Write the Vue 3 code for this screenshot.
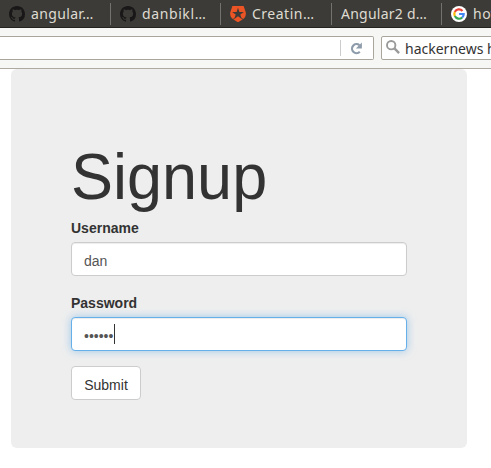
<script setup>
import { ref } from 'vue'

const tabs = [
  { icon: 'github', label: 'angular…', size: 'wide' },
  { icon: 'github', label: 'danbikl…', size: 'narrow' },
  { icon: 'auth0', label: 'Creatin…', size: 'wide' },
  { icon: '', label: 'Angular2 d…', size: 'plain' },
  { icon: 'google', label: 'how', size: 'wide' },
]
const username = ref('dan')
</script>

<template>
  <div class="window">
    <nav class="tabs">
      <div v-for="tab in tabs" :key="tab.label" class="tab" :class="tab.size">
        <svg v-if="tab.icon === 'github'" class="icon" viewBox="0 0 16 16">
          <path fill="#191717" d="M8 0C3.58 0 0 3.58 0 8c0 3.54 2.29 6.53 5.47 7.59.4.07.55-.17.55-.38 0-.19-.01-.82-.01-1.49-2.01.37-2.53-.49-2.69-.94-.09-.23-.48-.94-.82-1.13-.28-.15-.68-.52-.01-.53.63-.01 1.08.58 1.23.82.72 1.21 1.87.87 2.33.66.07-.52.28-.87.51-1.07-1.78-.2-3.64-.89-3.64-3.95 0-.87.31-1.59.82-2.15-.08-.2-.36-1.02.08-2.12 0 0 .67-.21 2.2.82.64-.18 1.32-.27 2-.27s1.36.09 2 .27c1.53-1.04 2.2-.82 2.2-.82.44 1.1.16 1.92.08 2.12.51.56.82 1.27.82 2.15 0 3.07-1.87 3.75-3.65 3.95.29.25.54.73.54 1.48 0 1.07-.01 1.93-.01 2.2 0 .21.15.46.55.38A8.01 8.01 0 0 0 16 8c0-4.42-3.58-8-8-8z" />
        </svg>
        <svg v-else-if="tab.icon === 'auth0'" class="icon" viewBox="0 0 16 16">
          <path fill="#eb5424" d="M2.4 0h11.2l1.9 5.6c.9 2.7 0 5.7-2.3 7.3L8 16.4l-5.2-3.5C.5 11.3-.4 8.3.5 5.6z" />
          <path fill="#3c3b37" d="M8 1.800l1.400 4.100h4.500l-3.600 2.700 1.400 4.300L8 10.300l-3.700 2.600 1.400-4.300-3.600-2.700h4.500z" />
          <path stroke="#3c3b37" stroke-width=".8" d="M11.200 12l2.200 1.600M4.800 12l-2.200 1.600" />
        </svg>
        <svg v-else-if="tab.icon === 'google'" class="icon" viewBox="0 0 16 16">
          <circle cx="8" cy="8" r="8" fill="#fff" />
          <g fill="none" stroke-width="2.2">
            <path stroke="#ea4335" d="M3.8 5.9A4.7 4.7 0 0 1 11.5 4.9" />
            <path stroke="#fbbc05" d="M3.8 5.9A4.7 4.7 0 0 0 3.8 10.1" />
            <path stroke="#34a853" d="M3.8 10.1A4.7 4.7 0 0 0 11.2 11.5" />
            <path stroke="#4285f4" d="M11.2 11.5A4.5 4.5 0 0 0 12.7 8H8.1" />
          </g>
        </svg>
        <span class="title">{{ tab.label }}</span>
      </div>
    </nav>
    <header class="toolbar">
      <div class="address">
        <div class="reload">
          <svg width="13" height="13" viewBox="0 0 13 13">
            <path d="M9.8 9.8A4.5 4.5 0 1 1 9.4 3.2" fill="none" stroke="#8d9bab" stroke-width="2.200" />
            <path d="M11.900.6v6H5.900z" fill="#8d9bab" />
          </svg>
        </div>
      </div>
      <div class="search">
        <svg width="14" height="14" viewBox="0 0 14 14" fill="none" stroke="#9a9a9a">
          <circle cx="5.2" cy="5.2" r="4.200" stroke-width="1.900" />
          <path d="M8.2 8.2l4.900 4.900" stroke-width="2.4" />
        </svg>
        <span>hackernews h</span>
      </div>
    </header>
    <main class="jumbotron">
      <h1>Signup</h1>
      <form @submit.prevent>
        <div class="group">
          <label for="username">Username</label>
          <input id="username" v-model="username" class="control" type="text" />
        </div>
        <div class="group">
          <label>Password</label>
          <div class="control focused"><span>••••••</span><i class="caret"></i></div>
        </div>
        <button type="submit">Submit</button>
      </form>
    </main>
  </div>
</template>

<style>
body {
  margin: 0;
  background: #fff;
  overflow: hidden;
}
</style>

<style scoped>
* {
  box-sizing: border-box;
}
.window {
  width: 491px;
  height: 468px;
  overflow: hidden;
  font-family: "Liberation Sans", Arial, sans-serif;
  font-size: 14px;
  line-height: 20px;
  color: #333;
}
.tabs {
  display: flex;
  height: 28px;
  padding-top: 3px;
  background: #3c3b37;
  border-bottom: 1px solid #242320;
}
.tab {
  flex: none;
  display: flex;
  align-items: center;
  gap: 6px;
  height: 22px;
  padding-left: 9px;
  border-right: 1px solid #74726c;
}
.wide {
  width: 111px;
  letter-spacing: 0.5px;
}
.wide:first-child {
  letter-spacing: 0.35px;
}
.narrow {
  width: 110px;
  letter-spacing: 0.6px;
}
.plain {
  width: 110px;
  letter-spacing: 0.25px;
}
.icon {
  flex: none;
  width: 16px;
  height: 16px;
}
.title {
  color: #dfdbd2;
  font-family: "Noto Sans", sans-serif;
  font-size: 14px;
  white-space: nowrap;
}
.toolbar {
  display: flex;
  height: 41px;
  padding-top: 8px;
  gap: 7px;
  background: #f6f6f4;
  border-bottom: 1px solid #aeaaa2;
}
.address,
.search {
  flex: none;
  height: 24px;
  background: #fff;
  border: 1px solid #aaa69e;
}
.address {
  display: flex;
  justify-content: flex-end;
  align-items: center;
  width: 374px;
  border-left: 0;
  border-radius: 0 2px 2px 0;
}
.reload {
  display: flex;
  align-items: center;
  width: 33px;
  height: 16px;
  padding-left: 9px;
  border-left: 1px solid #ccc;
}
.search {
  display: flex;
  align-items: center;
  gap: 5px;
  width: 140px;
  padding-left: 4px;
  border-radius: 2px 0 0 2px;
  color: #333;
  font-family: "Noto Sans", sans-serif;
  font-size: 14px;
  white-space: nowrap;
}
.search svg {
  flex: none;
  margin-bottom: 2px;
}
.search span {
  padding-top: 1px;
}
.jumbotron {
  width: 456px;
  height: 379px;
  margin-left: 11px;
  padding: 73px 60px 48px;
  background: #eee;
  border-radius: 6px;
}
h1 {
  height: 75px;
  margin: 0;
  font-size: 63px;
  font-weight: normal;
  line-height: 70px;
  transform: scaleY(1.035);
  transform-origin: 0 60px;
}
.group {
  height: 75px;
}
label {
  display: block;
  height: 25px;
  padding-top: 1px;
  font-weight: bold;
}
.control {
  display: flex;
  align-items: center;
  width: 336px;
  height: 34px;
  margin: 0;
  padding: 4px 12px 0;
  border: 1px solid #ccc;
  border-radius: 4px;
  outline: 0;
  background: #fff;
  box-shadow: inset 0 1px 1px rgba(0, 0, 0, 0.075);
  color: #555;
  font: 14px/20px "Liberation Sans", Arial, sans-serif;
}
.focused {
  border-color: #66afe9;
  box-shadow: inset 0 1px 1px rgba(0, 0, 0, 0.075), 0 0 8px rgba(102, 175, 233, 0.6);
}
.caret {
  width: 1px;
  height: 20px;
  margin: 0 0 4px 0.6px;
  background: #333;
}
button {
  width: 70px;
  height: 34px;
  margin-top: -1px;
  padding: 4px 0 0;
  border: 1px solid #ccc;
  border-radius: 4px;
  background: #fff;
  color: #333;
  font: 14px/20px "Liberation Sans", Arial, sans-serif;
}
</style>
